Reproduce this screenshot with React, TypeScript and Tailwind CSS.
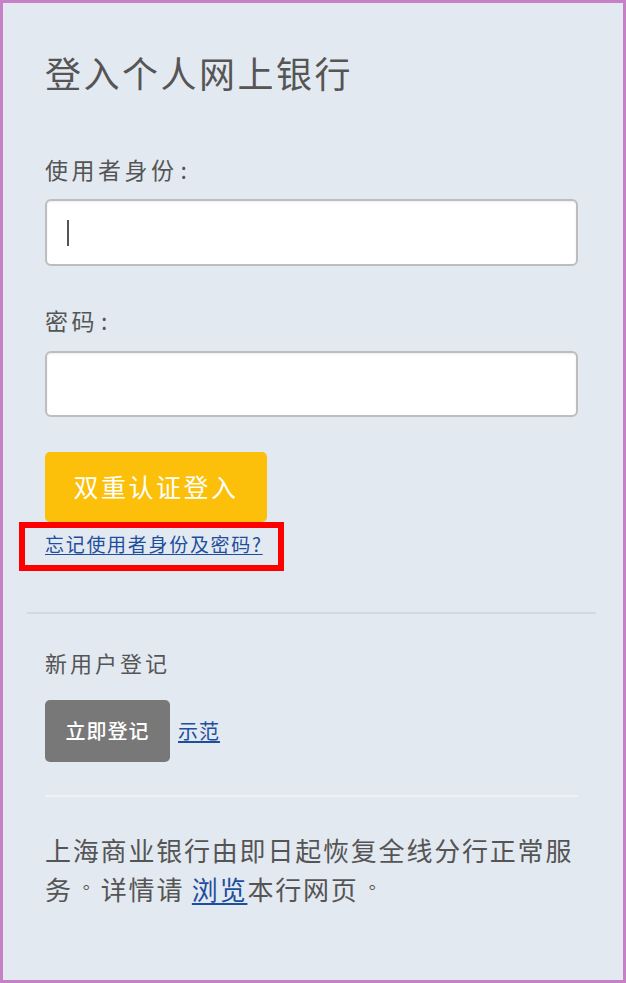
import React from "react";

const cjk = { fontFamily: '"Noto Sans CJK SC", "Noto Sans", sans-serif' };

function Dot() {
  return (
    <span className="inline-block w-[28px] pl-[10px] text-[18px] leading-[18px] tracking-normal -translate-y-[11px]">
      。
    </span>
  );
}

export default function App() {
  return (
    <div
      className="w-[626px] h-[983px] bg-[#e3e9f1] border-[3px] border-[#c680c6] pl-[42px] pr-[45px] pt-[46px] flex flex-col text-[#555555]"
      style={cjk}
    >
      <h1 className="h-[46px] leading-[46px] text-[36px] tracking-[2.5px] font-normal">登入个人网上银行</h1>

      <div className="mt-[59px] h-[30px] leading-[30px] text-[23px] tracking-[3.5px]">
        使用者身份<span className="ml-[3px]">:</span>
      </div>
      <div className="mt-[15px] h-[67px] bg-white border-2 border-[#bdbdbd] rounded-[6px] shadow-[inset_0_1px_2px_rgba(0,0,0,0.08)] flex items-center pl-[20px]">
        <span className="block w-[2px] h-[26px] bg-[#555555]" />
      </div>

      <div className="mt-[39px] h-[30px] leading-[30px] text-[23px] tracking-[3.5px]">
        密码<span className="ml-[3px]">:</span>
      </div>
      <div className="mt-[16px] h-[66px] bg-white border-2 border-[#bdbdbd] rounded-[6px] shadow-[inset_0_1px_2px_rgba(0,0,0,0.08)]" />

      <button className="mt-[35px] w-[222px] h-[70px] rounded-[5px] bg-[#fcbf0a] text-white text-[25px] tracking-[2.5px] flex items-center justify-center">
        双重认证登入
      </button>

      <div className="relative mt-[11px] h-[22px] self-start">
        <a className="block leading-[22px] text-[19px] tracking-[1.7px] text-[#1d4f9e] underline underline-offset-[2px]">
          忘记使用者身份及密码?
        </a>
        <div className="absolute left-[-26px] top-[-11px] w-[265px] h-[49px] border-[6px] border-[#ff0000] pointer-events-none" />
      </div>

      <div className="mt-[57px] -ml-[18px] -mr-[18px] h-[2px] bg-[#d3d9e1]" />

      <div className="mt-[33px] h-[30px] leading-[30px] text-[22px] tracking-[3px]">新用户登记</div>

      <div className="mt-[23px] flex items-center">
        <button className="w-[125px] h-[62px] rounded-[5px] bg-[#787878] text-white text-[20px] font-medium tracking-[1px] flex items-center justify-center">
          立即登记
        </button>
        <a className="ml-[8px] text-[20px] tracking-[1px] text-[#1d4f9e] underline underline-offset-[2px]">示范</a>
      </div>

      <div className="mt-[33px] h-[2px] bg-[#eef2f7]" />

      <p className="mt-[33px] text-[26px] leading-[39px] tracking-[1.8px]">
        上海商业银行由即日起恢复全线分行正常服
        <br />
        务<Dot />详情请 <a className="text-[#1d4f9e] underline underline-offset-[3px]">浏览</a>本行网页<Dot />
      </p>
    </div>
  );
}
